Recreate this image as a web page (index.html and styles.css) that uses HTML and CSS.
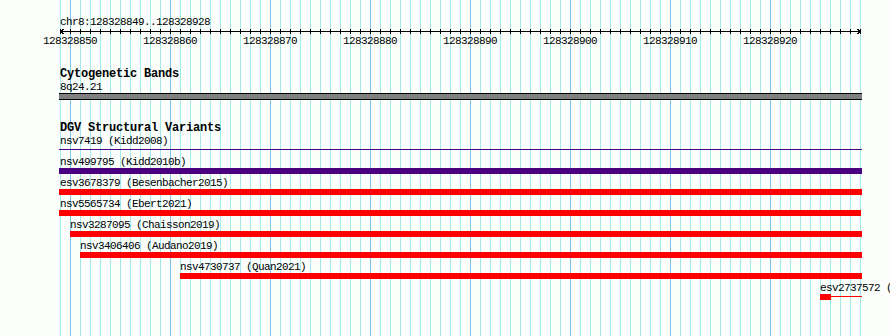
FILE: index.html
```html
<!DOCTYPE html>
<html>
<head>
  <title>chr8:128328849..128328928</title>
  <link rel="stylesheet" href="styles.css">
</head>
<body>

<div class="panel">

  <div class="ruler">
    <div class="ruler-title">chr8:128328849..128328928</div>
    <svg class="ruler-axis" width="803" height="6" viewBox="0 0 803 6">
      <defs>
        <pattern id="tick" x="1" y="0" width="10" height="6" patternUnits="userSpaceOnUse">
          <rect x="0" y="1" width="1" height="5" fill="#000"></rect>
        </pattern>
      </defs>
      <rect x="1" y="0" width="801" height="6" fill="url(#tick)"></rect>
      <line x1="1" y1="3.5" x2="802" y2="3.5" stroke="#000" stroke-width="1"></line>
      <polyline points="5,1 1.5,3.5 5,6" fill="none" stroke="#000" stroke-width="1"></polyline>
      <polyline points="798,1 801.5,3.5 798,6" fill="none" stroke="#000" stroke-width="1"></polyline>
    </svg>
    <div class="ruler-labels">
      <span>128328850</span>
      <span>128328860</span>
      <span>128328870</span>
      <span>128328880</span>
      <span>128328890</span>
      <span>128328900</span>
      <span>128328910</span>
      <span>128328920</span>
    </div>
  </div>

  <section class="track track-cyto">
    <h2 class="track-title">Cytogenetic Bands</h2>
    <div class="feature clipped">
      <div class="feature-label">8q24.21</div>
      <div class="band"></div>
    </div>
  </section>

  <section class="track track-dgv">
    <h2 class="track-title">DGV Structural Variants</h2>

    <div class="feature clipped" style="width:803px">
      <div class="feature-label">nsv7419 (Kidd2008)</div>
      <div class="glyph"><div class="line purple"></div></div>
    </div>

    <div class="feature clipped" style="width:803px">
      <div class="feature-label">nsv499795 (Kidd2010b)</div>
      <div class="glyph"><div class="box purple"></div></div>
    </div>

    <div class="feature clipped" style="width:803px">
      <div class="feature-label">esv3678379 (Besenbacher2015)</div>
      <div class="glyph"><div class="box red"></div></div>
    </div>

    <div class="feature clipped" style="width:802px">
      <div class="feature-label">nsv5565734 (Ebert2021)</div>
      <div class="glyph"><div class="box red"></div></div>
    </div>

    <div class="feature" style="margin-left:11px;width:792px">
      <div class="feature-label">nsv3287095 (Chaisson2019)</div>
      <div class="glyph"><div class="box red"></div></div>
    </div>

    <div class="feature" style="margin-left:21px;width:782px">
      <div class="feature-label">nsv3406406 (Audano2019)</div>
      <div class="glyph"><div class="box red"></div></div>
    </div>

    <div class="feature" style="margin-left:121px;width:682px">
      <div class="feature-label">nsv4730737 (Quan2021)</div>
      <div class="glyph"><div class="box red"></div></div>
    </div>

    <div class="feature" style="margin-left:761px;width:42px">
      <div class="feature-label">esv2737572 (Sudmant2015)</div>
      <div class="glyph">
        <div class="box red" style="flex:0 0 11px"></div>
        <div class="line red"></div>
      </div>
    </div>
  </section>

</div>

</body>
</html>
```

FILE: styles.css
```css
body {
  margin: 0;
  background-color: #fbfefb;
  font-family: "Liberation Mono", "DejaVu Sans Mono", monospace;
  color: #000;
  overflow: hidden;
}

.panel {
  margin-left: 59px;
  width: 803px;
  min-height: 336px;
  padding-top: 15px;
  box-sizing: border-box;
  background-image:
    linear-gradient(to right, #7cc6ec 0 1px, transparent 1px),
    linear-gradient(to right, #a3e9ee 0 1px, transparent 1px);
  background-size: 100px 100%, 10px 100%;
  background-position: 11px 0, 1px 0;
  background-repeat: repeat-x;
}

/* text rows: 13px cells, glyphs sit one pixel low like the gd fonts */
.ruler-title,
.ruler-labels,
.track-title,
.feature-label {
  height: 13px;
  padding-top: 1px;
  box-sizing: border-box;
  line-height: 13px;
  white-space: nowrap;
}

/* ruler */
.ruler-title {
  padding-left: 1px;
  font-size: 11px;
  letter-spacing: -0.6px;
}
.ruler-axis {
  display: block;
  overflow: visible;
  shape-rendering: crispEdges;
}
.ruler-labels {
  display: flex;
  margin-left: -39px;
  font-size: 11px;
  letter-spacing: -0.6px;
}
.ruler-labels span {
  flex: 0 0 100px;
  text-align: center;
}

/* tracks */
.track { margin-top: 20px; }
.track-dgv { margin-top: 21px; }
.track-title {
  margin: 0;
  padding-left: 1px;
  font-size: 12px;
  font-weight: bold;
  letter-spacing: -0.2px;
}

.feature { width: 803px; }
.feature-label {
  font-size: 11px;
  letter-spacing: -0.6px;
}
.feature.clipped .feature-label { padding-left: 1px; }

.band {
  height: 7px;
  box-sizing: border-box;
  border-top: 1px solid #000;
  border-bottom: 1px solid #000;
  background-color: #808080;
}

.glyph {
  display: flex;
  align-items: flex-start;
  height: 6px;
  margin-bottom: 2px;
}
.glyph .box { flex: 1; height: 6px; }
.glyph .line { flex: 1; height: 1px; margin-top: 2px; }
.purple { background-color: #4b0082; }
.red { background-color: #ff0000; }
```
